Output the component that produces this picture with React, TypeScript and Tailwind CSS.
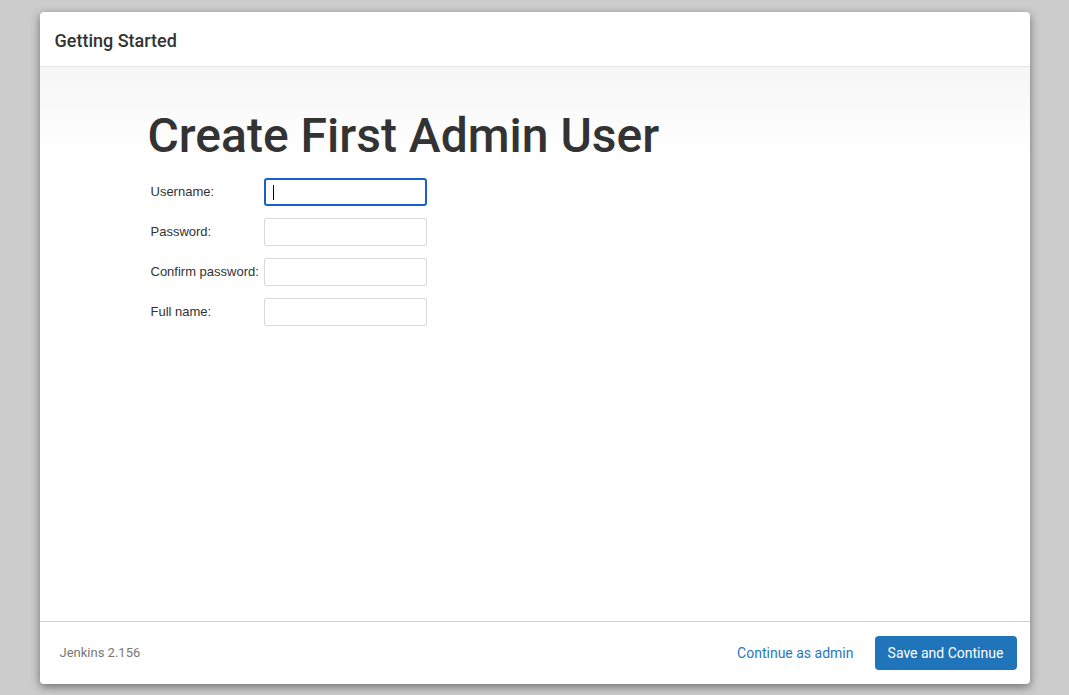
import React from 'react'

const fields = ['Username:', 'Password:', 'Confirm password:', 'Full name:']

export default function App() {
    return (
        <div className="min-h-[695px] bg-[#cccccc] pt-[12px]" style={{ fontFamily: 'Roboto, "Liberation Sans", sans-serif' }}>
            <div className="mx-auto flex h-[672px] w-[990px] flex-col overflow-hidden rounded-[4px] bg-white shadow-[0_3px_10px_rgba(0,0,0,0.45)]">
                {/* Header */}
                <div className="flex h-[55px] flex-shrink-0 items-center border-b border-[#e2e2e2] px-[15px] pt-[3px]">
                    <h4 className="text-[18px] font-medium text-[#333]">Getting Started</h4>
                </div>

                {/* Body */}
                <div className="flex-1 bg-gradient-to-b from-[#f6f6f6] via-white via-[16%] to-white pl-[108px] pt-[36px]">
                    <h1 className="text-[48px] leading-[66px] font-medium text-[#333]">Create First Admin User</h1>
                    <div className="mt-[9px] flex flex-col gap-[12px] pl-[3px]" style={{ fontFamily: '"Liberation Sans", Arial, sans-serif' }}>
                        {fields.map((f, i) => (
                            <div key={f} className="flex items-center">
                                <label className="w-[113px] text-[13px] text-[#333]">{f}</label>
                                {i === 0 ? (
                                    <div className="flex h-[28px] w-[163px] items-center rounded-[3px] border-2 border-[#1a5fd0] bg-white pl-[7px]">
                                        <span className="h-[15px] w-px bg-black" />
                                    </div>
                                ) : (
                                    <div className="h-[28px] w-[163px] rounded-[2px] border border-[#d9d9d9] bg-white" />
                                )}
                            </div>
                        ))}
                    </div>
                </div>

                {/* Footer */}
                <div className="flex h-[63px] flex-shrink-0 items-center justify-between border-t border-[#cfcfcf] pl-[20px] pr-[13px]">
                    <span className="text-[13px] text-[#777]">Jenkins 2.156</span>
                    <div className="flex items-center gap-[21px]">
                        <a className="text-[14px] text-[#2a78bd]">Continue as admin</a>
                        <button className="h-[34px] w-[142px] rounded-[4px] bg-[#1f74ba] text-[14px] text-white">Save and Continue</button>
                    </div>
                </div>
            </div>
        </div>
    )
}
